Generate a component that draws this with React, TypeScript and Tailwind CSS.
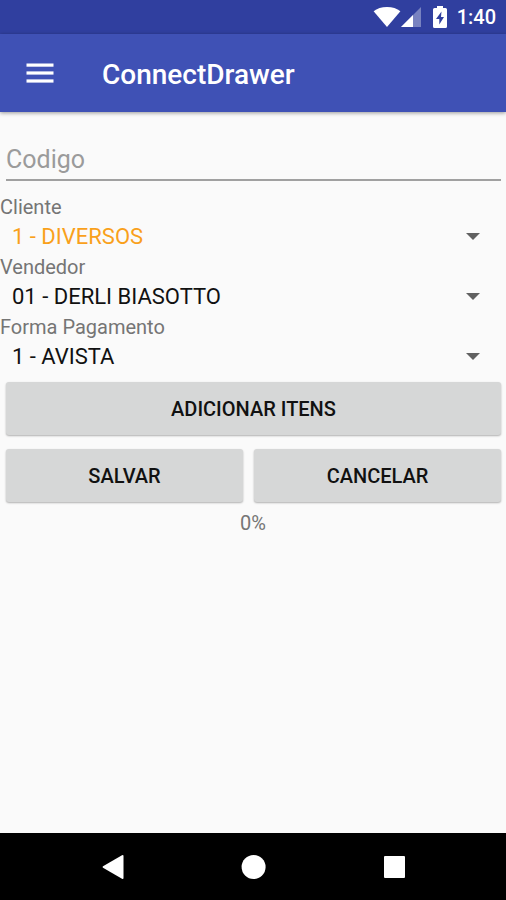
import React from 'react';

type SpinnerProps = {
  id: string;
  label: string;
  options: string[];
  className?: string;
};

function StatusBar() {
  return (
    <div className="h-[34px] shrink-0 bg-[#303f9f] text-white flex items-center justify-end pr-[10px]">
      {/* Wifi */}
      <svg className="w-7 h-5" viewBox="0 0 28 20" fill="currentColor">
        <path d="M14 20 L0.6 4.2 C4 1.5 8.7 0 14 0 C19.3 0 24 1.5 27.4 4.2 Z" />
      </svg>
      {/* Signal */}
      <svg className="w-5 h-5" viewBox="0 0 20 20" fill="currentColor">
        <path d="M0 20 L20 0 V20 Z" opacity="0.35" />
        <path d="M0 20 L12 8 V20 Z" />
      </svg>
      {/* Battery */}
      <svg className="w-[14px] h-[22px] ml-3" viewBox="0 0 14 22">
        <path d="M4 0 H10 V2 H12.5 Q14 2 14 3.5 V20.5 Q14 22 12.5 22 H1.5 Q0 22 0 20.5 V3.5 Q0 2 1.5 2 H4 Z" fill="#ffffff" />
        <path d="M8.5 5.5 L3 13 H6.3 V18.5 L11 11 H8 Z" fill="#303f9f" />
      </svg>
      <span className="ml-[10px] text-xl font-medium">1:40</span>
    </div>
  );
}

function AppBar() {
  return (
    <header className="relative h-[78px] shrink-0 bg-[#3f51b5] text-white flex items-center pl-[26px] shadow-[0_1px_4px_rgba(0,0,0,0.4)]">
      <button type="button" aria-label="Menu" className="w-7 h-5">
        <svg className="w-7 h-5" viewBox="0 0 28 20" fill="currentColor">
          <rect x="0.5" y="0.5" width="27" height="3.2" />
          <rect x="0.5" y="8.4" width="27" height="3.2" />
          <rect x="0.5" y="16.4" width="27" height="3.2" />
        </svg>
      </button>
      <h1 className="ml-12 pt-1 text-[28px] leading-8 font-medium">ConnectDrawer</h1>
    </header>
  );
}

function Spinner({ id, label, options, className = 'text-[#111111]' }: SpinnerProps) {
  return (
    <div>
      <label htmlFor={id} className="block h-6 text-xl leading-6 text-[#757575]">
        {label}
      </label>
      <div className="relative">
        <select
          id={id}
          className={`block w-full h-9 appearance-none bg-transparent pl-3 pr-12 text-[22px] leading-9 outline-none ${className}`}
        >
          {options.map((option) => (
            <option key={option}>{option}</option>
          ))}
        </select>
        <svg
          className="absolute right-[26px] top-[14px] w-[14px] h-[7px] pointer-events-none"
          viewBox="0 0 14 7"
          fill="#616161"
        >
          <path d="M0 0 H14 L7 7 Z" />
        </svg>
      </div>
    </div>
  );
}

function ActionButton({ children }: { children: React.ReactNode }) {
  return (
    <button
      type="button"
      className="w-full h-[53px] rounded-[3px] bg-[#d6d7d7] text-xl font-medium text-[#111111] shadow-[0_1px_2px_rgba(0,0,0,0.3)]"
    >
      {children}
    </button>
  );
}

function NavigationBar() {
  return (
    <nav className="h-[67px] shrink-0 bg-black text-white flex items-center justify-center gap-[115px] pl-[2px]">
      <button type="button" aria-label="Back" className="size-[26px]">
        <svg className="size-[26px]" viewBox="0 0 26 26" fill="currentColor">
          <path d="M3 12.3 L22 1.2 Q23.5 0.6 23.5 2 V24 Q23.5 25.4 22 24.8 L3 13.7 Q2 13 3 12.3 Z" />
        </svg>
      </button>
      <button type="button" aria-label="Home" className="size-[26px]">
        <svg className="size-[26px]" viewBox="0 0 26 26" fill="currentColor">
          <circle cx="12.6" cy="13" r="12" />
        </svg>
      </button>
      <button type="button" aria-label="Recent apps" className="size-[26px]">
        <svg className="size-[26px]" viewBox="0 0 26 26" fill="currentColor">
          <rect x="2" y="2" width="21" height="22" rx="1" />
        </svg>
      </button>
    </nav>
  );
}

export default function App() {
  return (
    <div className="min-h-screen flex flex-col bg-[#fafafa] font-['Roboto',sans-serif]">
      <StatusBar />
      <AppBar />

      <main className="flex-1">
        <form onSubmit={(e) => e.preventDefault()}>
          <div className="pl-[6px] pr-[5px] pt-6 pb-[14px]">
            <input
              type="text"
              aria-label="Codigo"
              placeholder="Codigo"
              className="block w-full h-[45px] pt-1 border-b-2 border-[#a0a0a0] bg-transparent text-[25px] text-[#111111] placeholder:text-[#9b9b9b] outline-none"
            />
          </div>

          <Spinner id="cliente" label="Cliente" options={['1 - DIVERSOS']} className="text-[#f9a01b]" />
          <Spinner id="vendedor" label="Vendedor" options={['01 - DERLI BIASOTTO']} />
          <Spinner id="pagamento" label="Forma Pagamento" options={['1 - AVISTA']} />

          <div className="pl-[6px] pr-[5px] pt-[7px]">
            <ActionButton>ADICIONAR ITENS</ActionButton>
            <div className="mt-[14px] grid grid-cols-[237fr_247fr] gap-[11px]">
              <ActionButton>SALVAR</ActionButton>
              <ActionButton>CANCELAR</ActionButton>
            </div>
          </div>
        </form>
        <p className="mt-[9px] text-center text-xl leading-6 text-[#757575]">0%</p>
      </main>

      <NavigationBar />
    </div>
  );
}
